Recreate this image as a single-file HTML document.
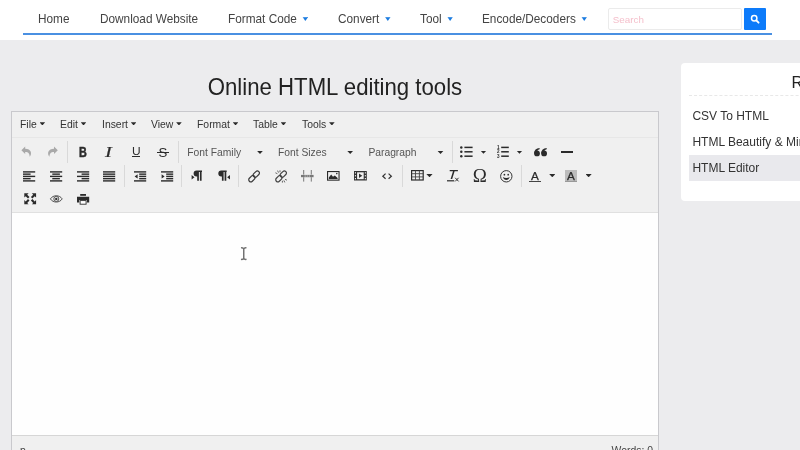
<!DOCTYPE html>
<html><head><meta charset="utf-8">
<style>
*{box-sizing:border-box;margin:0;padding:0}
html,body{width:800px;height:450px;overflow:hidden}
body{background:#ececee;font-family:"Liberation Sans",Arial,sans-serif;color:#333;position:relative;will-change:transform}
.nav{position:absolute;left:0;top:0;width:800px;height:40px;background:#fff}
.nav .line{position:absolute;left:23px;top:32.8px;width:749px;height:2px;background:#4a90e2}
.nav a{position:absolute;top:11px;font-size:11.8px;color:#444;white-space:nowrap;line-height:15px;transform:scaleY(1.07);transform-origin:0 3px}
.nav a i{display:inline-block;width:5.8px;height:4px;background:#1a7be0;clip-path:polygon(0 0,100% 0,50% 100%);margin-left:5.6px;vertical-align:1.4px}
.search{position:absolute;left:608px;top:8px;width:134px;height:22px;border:1px solid #ebebeb;border-radius:2px;background:#fff;font-size:9.8px;color:#f5c0cc;padding:5.4px 0 0 3.8px;line-height:12px}
.sbtn{position:absolute;left:744px;top:8px;width:22px;height:22px;background:#0d7bfa;border-radius:1px}
h1{position:absolute;left:11px;top:73px;width:648px;text-align:center;font-size:22.2px;font-weight:normal;color:#222;line-height:28px;transform:scaleY(1.04);transform-origin:50% 5px}
.ed{position:absolute;left:11px;top:111px;width:648px;height:346px;border:1px solid #c9c9cd;background:#f0f0f0}
.menubar{position:absolute;left:0;top:0;width:646px;height:26px;border-bottom:1px solid #e7e7e7}
.menubar span{position:absolute;top:5.6px;font-size:10.4px;color:#333;line-height:14px;white-space:nowrap}
.menubar span i{display:inline-block;width:5.6px;height:3.1px;background:#2b2b2b;clip-path:polygon(0 0,100% 0,50% 100%);margin-left:2.8px;vertical-align:2.2px}
.tb{position:absolute;left:0;top:27px;width:646px;height:74px;border-bottom:1px solid #e0e0e0}
.content{position:absolute;left:0;top:101px;width:646px;height:222px;background:#fefefe}
.status{position:absolute;left:0;top:322.5px;width:646px;height:24px;border-top:1px solid #d6d6d6;background:#f0f0f0;font-size:10.4px;color:#444}
.side{position:absolute;left:681px;top:63px;width:140px;height:137.5px;background:#fff;border-radius:4px}
.side .t{position:absolute;left:110.4px;top:11px;font-size:16px;color:#222;line-height:18px}
.side .dl{position:absolute;left:8px;top:32px;width:140px;border-top:1px dashed #e8e8e8}
.side .it{position:absolute;left:8px;width:140px;height:25px;font-size:12px;color:#333;line-height:25px;padding-left:3.4px;white-space:nowrap}
.side .it.sel{background:#e9e9ed}
.ic{position:absolute;overflow:visible}
.sep{position:absolute;width:1px;height:22px;background:#d9d9d9}
.car{position:absolute;width:6.2px;height:3.3px;background:#2b2b2b;clip-path:polygon(0 0,100% 0,50% 100%)}
.tx{position:absolute;font-size:10.3px;line-height:14px;color:#555;white-space:nowrap}
.gl{position:absolute;line-height:14px;color:#2b2b2b;white-space:nowrap}
.gl.b{font-weight:bold;font-size:14.6px;-webkit-text-stroke:0.55px #2b2b2b;transform:scaleX(0.74);transform-origin:0 0}
.gl.i{font-family:"Liberation Serif",serif;font-style:italic;font-size:14.6px;-webkit-text-stroke:0.2px #2b2b2b;transform:scaleX(1.4);transform-origin:0 0}
.gl.u{font-size:11.4px;transform:scaleX(1.05);transform-origin:0 0}
.gl.s{font-size:13.2px}
.gl.om{font-size:19px;font-family:"Liberation Serif",serif}
.gl.fa{font-size:10.4px;-webkit-text-stroke:0.25px #2b2b2b;transform:scaleX(1.13);transform-origin:0 0}
</style></head><body>
<div class="nav">
<a style="left:38px">Home</a>
<a style="left:100px">Download Website</a>
<a style="left:228px">Format Code<i></i></a>
<a style="left:338px">Convert<i></i></a>
<a style="left:420px">Tool<i></i></a>
<a style="left:482px">Encode/Decoders<i></i></a>
<div class="search">Search</div>
<div class="sbtn"><svg width="22" height="22" viewBox="0 0 22 22"><circle cx="10.2" cy="10.3" r="2.7" fill="none" stroke="#fff" stroke-width="1.5"/><path d="M12.4 12.5 L14.6 14.7" stroke="#fff" stroke-width="1.8" stroke-linecap="round"/></svg></div>
<div class="line"></div>
</div>
<h1>Online HTML editing tools</h1>
<div class="ed">
<div class="menubar">
<span style="left:8px">File<i></i></span>
<span style="left:48px">Edit<i></i></span>
<span style="left:90px">Insert<i></i></span>
<span style="left:139px">View<i></i></span>
<span style="left:185px">Format<i></i></span>
<span style="left:241px">Table<i></i></span>
<span style="left:290px">Tools<i></i></span>
</div>
<div class="tb"></div>
<div class="content"></div>
<div class="status"><span style="position:absolute;left:8px;top:9px">p</span><span style="position:absolute;left:599.6px;top:9px">Words: 0</span></div>
</div>
<svg class="ic" style="left:20.50px;top:146.20px" width="11.2" height="11.2" viewBox="0 0 11.2 11.2"><path d="M4.2 0.5 L0.4 4.3 L4.2 8.1 L4.2 5.9 C6.8 5.8 8.6 6.8 8.7 10.8 C11.5 7.5 10 2.8 4.2 2.7 Z" fill="#a9a9a9"/></svg>
<svg class="ic" style="left:47.00px;top:146.20px" width="11.2" height="11.2" viewBox="0 0 11.2 11.2"><g transform="translate(11.2,0) scale(-1,1)"><path d="M4.2 0.5 L0.4 4.3 L4.2 8.1 L4.2 5.9 C6.8 5.8 8.6 6.8 8.7 10.8 C11.5 7.5 10 2.8 4.2 2.7 Z" fill="#a9a9a9"/></g></svg>
<div class="sep" style="left:66.9px;top:141.0px"></div>
<span class="gl b" style="left:79.0px;top:145.2px">B</span>
<span class="gl i" style="left:104.8px;top:145.1px">I</span>
<span class="gl u" style="left:132.0px;top:144.3px">U</span>
<div style="position:absolute;left:132.4px;top:155.9px;width:7.7px;height:1.2px;background:#2b2b2b"></div>
<span class="gl s" style="left:158.4px;top:145.7px">S</span>
<div style="position:absolute;left:156.6px;top:151.6px;width:12.5px;height:1px;background:#2b2b2b"></div>
<div class="sep" style="left:178.0px;top:141.0px"></div>
<span class="tx" style="left:187.3px;top:146.2px">Font Family</span>
<div class="car" style="left:256.9px;top:150.8px"></div>
<span class="tx" style="left:278.0px;top:146.2px">Font Sizes</span>
<div class="car" style="left:347.1px;top:150.8px"></div>
<span class="tx" style="left:368.4px;top:146.2px">Paragraph</span>
<div class="car" style="left:437.4px;top:150.8px"></div>
<div class="sep" style="left:451.5px;top:141.0px"></div>
<svg class="ic" style="left:460.00px;top:146.10px" width="12.8" height="11.6" viewBox="0 0 12.8 11.6"><circle cx="1.3" cy="1.4" r="1.25" fill="#2b2b2b"/><rect x="4.4" y="0.6499999999999999" width="8.2" height="1.5" fill="#2b2b2b"/><circle cx="1.3" cy="5.8" r="1.25" fill="#2b2b2b"/><rect x="4.4" y="5.05" width="8.2" height="1.5" fill="#2b2b2b"/><circle cx="1.3" cy="10.2" r="1.25" fill="#2b2b2b"/><rect x="4.4" y="9.45" width="8.2" height="1.5" fill="#2b2b2b"/></svg>
<div class="car" style="left:480.4px;top:150.5px"></div>
<svg class="ic" style="left:497.00px;top:146.00px" width="12" height="12.2" viewBox="0 0 12 12.2"><rect x="4.2" y="0.6499999999999999" width="7.6" height="1.5" fill="#2b2b2b"/><rect x="4.2" y="5.05" width="7.6" height="1.5" fill="#2b2b2b"/><rect x="4.2" y="9.45" width="7.6" height="1.5" fill="#2b2b2b"/><text x="0" y="3.1" font-size="4.6" font-family="Liberation Sans,sans-serif" font-weight="bold" fill="#2b2b2b">1</text><text x="0" y="7.5" font-size="4.6" font-family="Liberation Sans,sans-serif" font-weight="bold" fill="#2b2b2b">2</text><text x="0" y="11.9" font-size="4.6" font-family="Liberation Sans,sans-serif" font-weight="bold" fill="#2b2b2b">3</text></svg>
<div class="car" style="left:516.4px;top:150.5px"></div>
<svg class="ic" style="left:534.40px;top:148.30px" width="13.2" height="8.6" viewBox="0 0 13.2 8.6"><circle cx="3" cy="5.4" r="2.9" fill="#2b2b2b"/><path d="M0.1 5.4 C0.1 2.2 2.2 0.3 5.6 0 L5.6 1.2 C3.6 1.7 2.9 3 3 4.4 Z" fill="#2b2b2b"/><g transform="translate(7.1,0)"><circle cx="3" cy="5.4" r="2.9" fill="#2b2b2b"/><path d="M0.1 5.4 C0.1 2.2 2.2 0.3 5.6 0 L5.6 1.2 C3.6 1.7 2.9 3 3 4.4 Z" fill="#2b2b2b"/></g></svg>
<div style="position:absolute;left:561px;top:151.15px;width:11.9px;height:1.6px;background:#2b2b2b"></div>
<svg class="ic" style="left:23.40px;top:170.50px" width="12.4" height="11" viewBox="0 0 12.4 11"><rect x="0" y="0.2" width="12.2" height="1.4" fill="#2b2b2b"/><rect x="0" y="2.45" width="7.6" height="1.4" fill="#2b2b2b"/><rect x="0" y="4.7" width="12.2" height="1.4" fill="#2b2b2b"/><rect x="0" y="6.95" width="7.6" height="1.4" fill="#2b2b2b"/><rect x="0" y="9.2" width="12.2" height="1.4" fill="#2b2b2b"/></svg>
<svg class="ic" style="left:50.10px;top:170.50px" width="12.4" height="11" viewBox="0 0 12.4 11"><rect x="0" y="0.2" width="12.2" height="1.4" fill="#2b2b2b"/><rect x="2.3" y="2.45" width="7.6" height="1.4" fill="#2b2b2b"/><rect x="0" y="4.7" width="12.2" height="1.4" fill="#2b2b2b"/><rect x="2.3" y="6.95" width="7.6" height="1.4" fill="#2b2b2b"/><rect x="0" y="9.2" width="12.2" height="1.4" fill="#2b2b2b"/></svg>
<svg class="ic" style="left:76.80px;top:170.50px" width="12.4" height="11" viewBox="0 0 12.4 11"><rect x="0" y="0.2" width="12.2" height="1.4" fill="#2b2b2b"/><rect x="4.6" y="2.45" width="7.6" height="1.4" fill="#2b2b2b"/><rect x="0" y="4.7" width="12.2" height="1.4" fill="#2b2b2b"/><rect x="4.6" y="6.95" width="7.6" height="1.4" fill="#2b2b2b"/><rect x="0" y="9.2" width="12.2" height="1.4" fill="#2b2b2b"/></svg>
<svg class="ic" style="left:103.40px;top:170.50px" width="12.4" height="11" viewBox="0 0 12.4 11"><rect x="0" y="0.2" width="12.2" height="1.4" fill="#2b2b2b"/><rect x="0" y="2.45" width="12.2" height="1.4" fill="#2b2b2b"/><rect x="0" y="4.7" width="12.2" height="1.4" fill="#2b2b2b"/><rect x="0" y="6.95" width="12.2" height="1.4" fill="#2b2b2b"/><rect x="0" y="9.2" width="12.2" height="1.4" fill="#2b2b2b"/></svg>
<svg class="ic" style="left:134.00px;top:170.50px" width="12.4" height="11" viewBox="0 0 12.4 11"><rect x="0" y="0.2" width="12.2" height="1.4" fill="#2b2b2b"/><rect x="5.2" y="2.45" width="7.0" height="1.4" fill="#2b2b2b"/><rect x="5.2" y="4.7" width="7.0" height="1.4" fill="#2b2b2b"/><rect x="5.2" y="6.95" width="7.0" height="1.4" fill="#2b2b2b"/><rect x="0" y="9.2" width="12.2" height="1.4" fill="#2b2b2b"/><path d="M3.6 3.2 L3.6 7.6 L0.6 5.4 Z" fill="#2b2b2b"/></svg>
<svg class="ic" style="left:160.50px;top:170.50px" width="12.4" height="11" viewBox="0 0 12.4 11"><rect x="0" y="0.2" width="12.2" height="1.4" fill="#2b2b2b"/><rect x="5.2" y="2.45" width="7.0" height="1.4" fill="#2b2b2b"/><rect x="5.2" y="4.7" width="7.0" height="1.4" fill="#2b2b2b"/><rect x="5.2" y="6.95" width="7.0" height="1.4" fill="#2b2b2b"/><rect x="0" y="9.2" width="12.2" height="1.4" fill="#2b2b2b"/><path d="M0.6 3.2 L0.6 7.6 L3.6 5.4 Z" fill="#2b2b2b"/></svg>
<div class="sep" style="left:124.2px;top:164.8px"></div>
<div class="sep" style="left:181.2px;top:164.8px"></div>
<svg class="ic" style="left:191.00px;top:170.00px" width="12" height="12" viewBox="0 0 12 12"><path d="M5.6 0.4 L11 0.4 L11 1.9 L10.6 1.9 L10.6 10.8 L8.9 10.8 L8.9 1.9 L7.9 1.9 L7.9 10.8 L6.2 10.8 L6.2 6.4 L5.6 6.4 A3 3 0 0 1 5.6 0.4 Z" fill="#2b2b2b"/><path d="M0.6 5 L0.6 9.4 L3.5 7.2 Z" fill="#2b2b2b"/></svg>
<svg class="ic" style="left:217.50px;top:170.00px" width="12.5" height="12" viewBox="0 0 12.5 12"><path d="M3.3 0.4 L8.7 0.4 L8.7 1.9 L8.3 1.9 L8.3 10.8 L6.6 10.8 L6.6 1.9 L5.6 1.9 L5.6 10.8 L3.9 10.8 L3.9 6.4 L3.3 6.4 A3 3 0 0 1 3.3 0.4 Z" fill="#2b2b2b"/><path d="M12 5 L12 9.4 L9.1 7.2 Z" fill="#2b2b2b"/></svg>
<div class="sep" style="left:237.9px;top:164.8px"></div>
<svg class="ic" style="left:248.00px;top:169.90px" width="12.4" height="12.8" viewBox="0 0 12.4 12.8"><g fill="none" stroke="#3a3a3a" stroke-width="1.2"><rect x="-3.6" y="-2.1" width="7.2" height="4.2" rx="2.1" transform="translate(3.9,8.7) rotate(-45)"/><rect x="-3.6" y="-2.1" width="7.2" height="4.2" rx="2.1" transform="translate(8.3,4.1) rotate(-45)"/></g></svg>
<svg class="ic" style="left:274.50px;top:169.90px" width="12.4" height="12.8" viewBox="0 0 12.4 12.8"><g fill="none" stroke="#444" stroke-width="1.2"><rect x="-3.6" y="-2.1" width="7.2" height="4.2" rx="2.1" transform="translate(3.9,8.7) rotate(-45)"/><rect x="-3.6" y="-2.1" width="7.2" height="4.2" rx="2.1" transform="translate(8.3,4.1) rotate(-45)"/></g><path d="M2.6 0.6 L3.5 2.6 M0.4 2.8 L2.4 3.7 M5 0.3 L5 2.2 M9.8 12.4 L8.9 10.4 M12 10.2 L10 9.3 M7.4 12.6 L7.4 10.8" stroke="#555" stroke-width="0.9" fill="none"/></svg>
<svg class="ic" style="left:300.80px;top:170.00px" width="12.6" height="11.6" viewBox="0 0 12.6 11.6"><path d="M2.7 0 L2.7 4.6 M10.3 0 L10.3 4.6 M2.7 7.2 L2.7 11.6 M10.3 7.2 L10.3 11.6" stroke="#777" stroke-width="1" fill="none"/><rect x="0" y="4.9" width="12.6" height="2.3" fill="#777"/><path d="M3.6 6.05 L9.6 6.05" stroke="#d8d8d8" stroke-width="0.9" stroke-dasharray="1.2 0.9"/></svg>
<svg class="ic" style="left:327.40px;top:171.00px" width="12.6" height="9.7" viewBox="0 0 12.6 9.7"><rect x="0.55" y="0.55" width="11.5" height="8.6" fill="none" stroke="#2b2b2b" stroke-width="1.1"/><path d="M1.8 8 L1.8 6.6 L4.2 3.6 L6 5.8 L7.8 4.4 L10.6 7 L10.6 8 Z" fill="#2b2b2b"/><circle cx="9.8" cy="2.6" r="0.8" fill="#2b2b2b"/></svg>
<svg class="ic" style="left:354.20px;top:170.80px" width="12.8" height="9.5" viewBox="0 0 12.8 9.5"><rect x="0" y="0" width="12.8" height="9.5" fill="#333"/><rect x="3.1" y="1.3" width="6.6" height="6.9" fill="#f0f0f0"/><path d="M5 2.6 L5 6.9 L8.3 4.75 Z" fill="#333"/><rect x="0.9" y="1.2" width="1.1" height="1.3" fill="#f0f0f0"/><rect x="0.9" y="4.1" width="1.1" height="1.3" fill="#f0f0f0"/><rect x="0.9" y="7.0" width="1.1" height="1.3" fill="#f0f0f0"/><rect x="10.8" y="1.2" width="1.1" height="1.3" fill="#f0f0f0"/><rect x="10.8" y="4.1" width="1.1" height="1.3" fill="#f0f0f0"/><rect x="10.8" y="7.0" width="1.1" height="1.3" fill="#f0f0f0"/></svg>
<svg class="ic" style="left:382.00px;top:172.70px" width="10.2" height="6.4" viewBox="0 0 10.2 6.4"><path d="M3.6 0.6 L0.8 3.2 L3.6 5.8 M6.6 0.6 L9.4 3.2 L6.6 5.8" fill="none" stroke="#333" stroke-width="1.2"/></svg>
<div class="sep" style="left:402.0px;top:164.8px"></div>
<svg class="ic" style="left:411.20px;top:170.30px" width="12.8" height="10.6" viewBox="0 0 12.8 10.6"><rect x="0.6" y="0.6" width="11.6" height="9.4" fill="none" stroke="#2b2b2b" stroke-width="1.2"/><path d="M0.6 3.7 L12.2 3.7 M0.6 6.9 L12.2 6.9 M4.5 0.6 L4.5 10 M8.4 0.6 L8.4 10" stroke="#444" stroke-width="0.9" fill="none"/></svg>
<div class="car" style="left:426.4px;top:173.9px"></div>
<svg class="ic" style="left:446.80px;top:170.10px" width="11.8" height="11.8" viewBox="0 0 11.8 11.8"><path d="M2.7 0 L10.9 0 L10.9 1.2 L7.6 1.2 L5.2 9 L3.6 9 L6 1.2 L2.7 1.2 Z" fill="#2b2b2b"/><rect x="0" y="10.2" width="7.2" height="1.2" fill="#2b2b2b"/><path d="M8.2 7.8 L11.6 11.4 M11.6 7.8 L8.2 11.4" stroke="#333" stroke-width="1"/></svg>
<span class="gl om" style="left:472.8px;top:169.4px">Ω</span>
<svg class="ic" style="left:500.30px;top:169.80px" width="12.6" height="12.6" viewBox="0 0 12.6 12.6"><circle cx="6.3" cy="6.3" r="5.7" fill="none" stroke="#333" stroke-width="1"/><circle cx="4.4" cy="4.7" r="0.85" fill="#2b2b2b"/><circle cx="8.2" cy="4.7" r="0.85" fill="#2b2b2b"/><path d="M2.9 7 C3.8 11 8.8 11 9.7 7 C8 8.2 4.6 8.2 2.9 7 Z" fill="#2b2b2b"/></svg>
<div class="sep" style="left:521.2px;top:164.8px"></div>
<div style="position:absolute;left:565.4px;top:170px;width:11.7px;height:12.1px;background:#bcbcbc;border-bottom:1.2px solid #9a9a9a"></div>
<span class="gl fa" style="left:531.4px;top:169.6px">A</span>
<div style="position:absolute;left:529px;top:180.9px;width:11.5px;height:1.3px;background:#444"></div>
<div class="car" style="left:549.2px;top:174.0px"></div>
<span class="gl fa" style="left:567.2px;top:169.6px">A</span>
<div class="car" style="left:585.5px;top:174.0px"></div>
<svg class="ic" style="left:23.50px;top:193.40px" width="12.4" height="11.6" viewBox="0 0 12.4 11.6"><path d="M0.3 0.3 L4.6 0.3 L3.2 1.7 L5.5 4 L4 5.5 L1.7 3.2 L0.3 4.6 Z" fill="#2b2b2b"/><g transform="translate(12.4,0) scale(-1,1)"><path d="M0.3 0.3 L4.6 0.3 L3.2 1.7 L5.5 4 L4 5.5 L1.7 3.2 L0.3 4.6 Z" fill="#2b2b2b"/></g><g transform="translate(0,11.6) scale(1,-1)"><path d="M0.3 0.3 L4.6 0.3 L3.2 1.7 L5.5 4 L4 5.5 L1.7 3.2 L0.3 4.6 Z" fill="#2b2b2b"/></g><g transform="translate(12.4,11.6) scale(-1,-1)"><path d="M0.3 0.3 L4.6 0.3 L3.2 1.7 L5.5 4 L4 5.5 L1.7 3.2 L0.3 4.6 Z" fill="#2b2b2b"/></g></svg>
<svg class="ic" style="left:50.00px;top:195.40px" width="12.6" height="7.8" viewBox="0 0 12.6 7.8"><path d="M0.4 3.9 C3 -0.3 9.6 -0.3 12.2 3.9 C9.6 8.1 3 8.1 0.4 3.9 Z" fill="none" stroke="#444" stroke-width="0.9"/><circle cx="6.3" cy="3.9" r="2.5" fill="none" stroke="#444" stroke-width="0.9"/><circle cx="6.3" cy="3.9" r="1.2" fill="#333"/></svg>
<svg class="ic" style="left:77.00px;top:194.00px" width="12.2" height="10.8" viewBox="0 0 12.2 10.8"><rect x="3.2" y="0" width="5.8" height="1.8" fill="#2b2b2b"/><path d="M0 2.8 L12.2 2.8 L12.2 8.4 L10 8.4 L10 6 L2.2 6 L2.2 8.4 L0 8.4 Z" fill="#2b2b2b"/><rect x="3.1" y="6.6" width="6" height="3.6" fill="#fff" stroke="#2b2b2b" stroke-width="0.9"/></svg>
<svg class="ic" style="left:240px;top:246px" width="8" height="15" viewBox="0 0 8 15"><path d="M1 1.9 C2.4 1.6 3.4 2.2 3.75 3 C4.1 2.2 5.1 1.6 6.5 1.9 M3.75 2.6 L3.75 12.6 M1 13.3 C2.4 13.6 3.4 13 3.75 12.2 C4.1 13 5.1 13.6 6.5 13.3" fill="none" stroke="#707070" stroke-width="1.45"/></svg>
<div class="side">
<div class="t">Related</div>
<div class="dl"></div>
<div class="it" style="top:41px">CSV To HTML</div>
<div class="it" style="top:67px">HTML Beautify &amp; Minify</div>
<div class="it sel" style="top:92.4px;height:25.6px;line-height:26.2px">HTML Editor</div>
</div>
</body></html>
